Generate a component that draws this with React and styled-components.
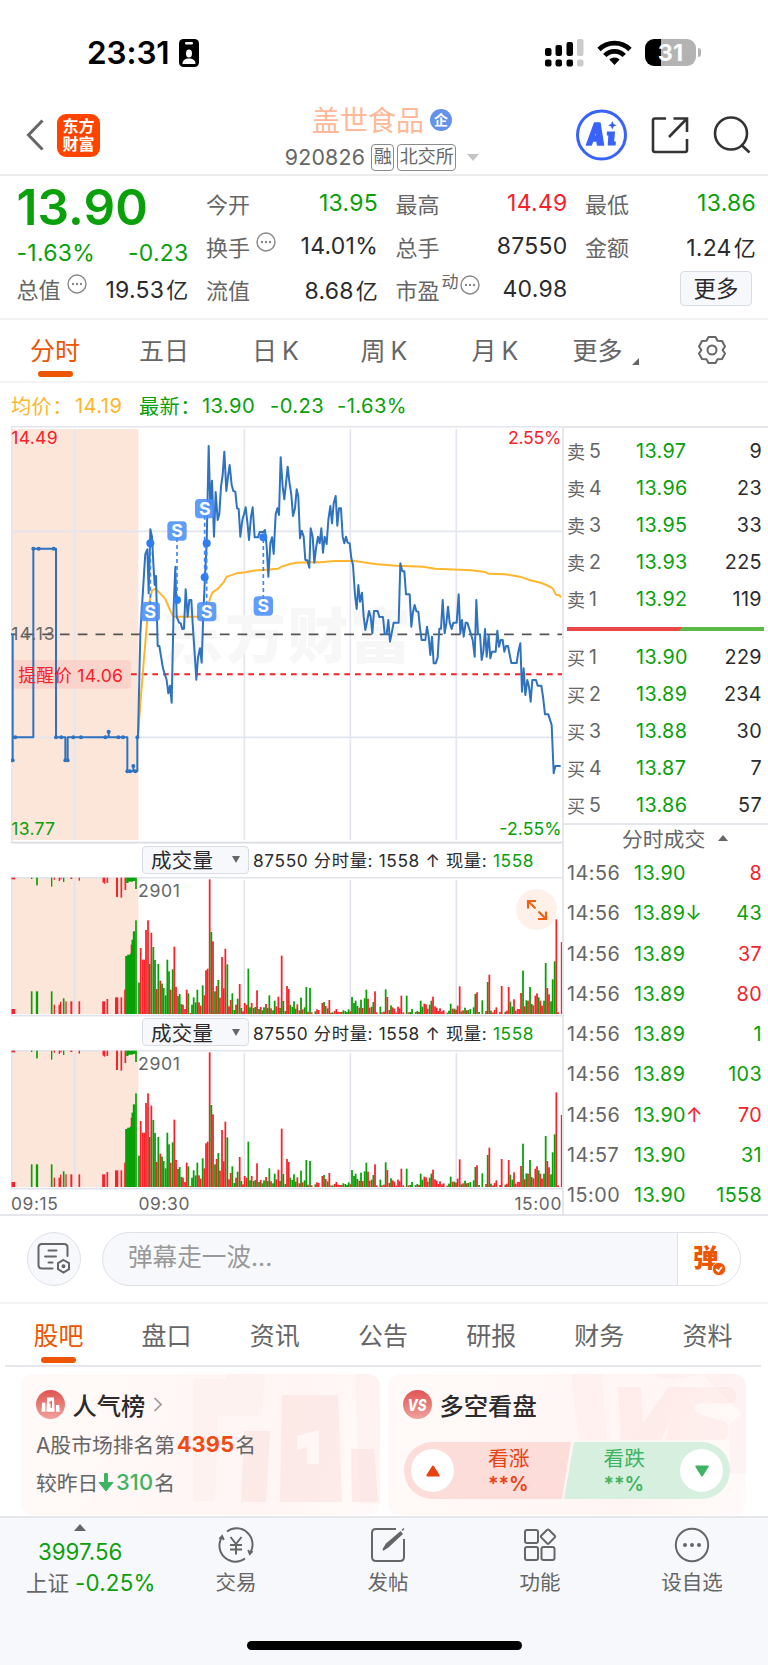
import React from "react";
import styled, { createGlobalStyle } from "styled-components";

const GREEN = "#09a009";
const RED = "#f5222a";
const ORANGE = "#ee5500";
const GREY = "#666666";
const INK = "#2b2b2d";
const LINE = "#e6e7ec";

const GlobalStyle = createGlobalStyle`
  * { box-sizing: border-box; }
  body {
    margin: 0;
    background: #fff;
    color: ${GREY};
    font-family: Inter, "Noto Sans CJK SC", sans-serif;
    -webkit-font-smoothing: antialiased;
  }
  svg { display: block; flex: none; }
  svg text { font-family: Inter, "Noto Sans CJK SC", sans-serif; }
`;

const Screen = styled.div`
  width: 768px;
  height: 1665px;
  overflow: hidden;
  display: flex;
  flex-direction: column;
  background: #fff;
`;

/* ---------- status bar ---------- */
const StatusBar = styled.header`
  height: 96px;
  padding: 9px 67px 0 87px;
  display: flex;
  align-items: center;
  flex: none;
`;
const Clock = styled.span`
  font-size: 31.5px;
  font-weight: 600;
  color: #000;
  width: 92px;
  letter-spacing: -0.1px;
`;
const StatusIcons = styled.div`
  margin-left: auto;
  display: flex;
  align-items: center;
  gap: 13px;
`;
const Battery = styled.div`
  width: 51px;
  height: 27px;
  border-radius: 9px;
  background: linear-gradient(90deg, #000 31%, #b3b3b3 31%);
  color: #fff;
  font-size: 23.5px;
  font-weight: 700;
  line-height: 27px;
  text-align: center;
`;
const BatteryWrap = styled.div`
  display: flex;
  align-items: center;
  gap: 2px;
`;
const BatteryNub = styled.i`
  width: 3px;
  height: 9px;
  border-radius: 0 3px 3px 0;
  background: #b3b3b3;
`;

/* ---------- title bar ---------- */
const TitleBar = styled.div`
  height: 80px;
  flex: none;
  display: grid;
  grid-template-columns: 1fr auto 1fr;
  border-bottom: 2px solid #ececee;
`;
const TitleLeft = styled.div`
  display: flex;
  align-items: center;
  gap: 13px;
  padding: 0 0 2px 26px;
  margin-bottom: -2px;
`;
const AppLogo = styled.div`
  width: 43px;
  height: 43px;
  border-radius: 9px;
  background: #ff4400;
  color: #fff;
  font-size: 16px;
  font-weight: 700;
  line-height: 18px;
  text-align: center;
  padding-top: 3px;
`;
const TitleCenter = styled.div`
  display: flex;
  flex-direction: column;
  align-items: center;
  width: 240px;
  padding-top: 7px;
  margin-left: -4px;
`;
const StockName = styled.div`
  display: flex;
  align-items: center;
  gap: 6px;
  height: 32px;
  font-size: 28px;
  color: #ffb998;
`;
const Badge = styled.span`
  width: 22px;
  height: 22px;
  margin-top: 1px;
  border-radius: 50%;
  background: #6492ea;
  color: #fff;
  font-size: 14px;
  font-weight: 700;
  line-height: 21px;
  text-align: center;
`;
const CodeLine = styled.div`
  display: flex;
  align-items: center;
  height: 28px;
  margin-top: 8px;
  font-size: 21.3px;
  letter-spacing: 0.25px;
`;
const Tag = styled.span`
  height: 27px;
  border: 1.5px solid #8a8a8a;
  border-radius: 4px;
  font-size: 18px;
  line-height: 24px;
  letter-spacing: 0;
  padding: 0 1.5px;
  margin-left: ${(p) => p.$gap}px;
`;
const Caret = styled.i`
  width: 0;
  height: 0;
  border-left: ${(p) => p.$w}px solid transparent;
  border-right: ${(p) => p.$w}px solid transparent;
  border-${(p) => (p.$up ? "bottom" : "top")}: ${(p) => p.$h}px solid ${(p) => p.$c || GREY};
  margin: ${(p) => p.$m || 0};
`;
const TitleRight = styled.div`
  display: flex;
  align-items: center;
  justify-content: flex-end;
  gap: 24px;
  padding: 0 17px 2px 0;
  margin-bottom: -2px;
`;

/* ---------- quote summary ---------- */
const Quote = styled.section`
  height: 144px;
  flex: none;
  display: grid;
  grid-template-columns: 172px 172px 172px 171px;
  column-gap: 17.5px;
  padding: 7px 0 0 16.5px;
  border-bottom: 2px solid #f1f1f3;
`;
const QuoteCol = styled.div`
  display: flex;
  flex-direction: column;
  margin-top: ${(p) => p.$mt || 0}px;
`;
const BigPrice = styled.div`
  height: 48px;
  line-height: 48px;
  font-size: 49.5px;
  font-weight: 600;
  color: ${GREEN};
  letter-spacing: 0.1px;
`;
const QuoteRow = styled.div`
  height: ${(p) => p.$h || 43}px;
  display: flex;
  align-items: center;
  font-size: 22px;
  color: ${GREY};
`;
const QuoteValue = styled.span`
  margin-left: ${(p) => (p.$start ? 0 : "auto")};
  color: ${(p) => p.$c || INK};
  font-size: 23px;
  letter-spacing: 0.25px;
`;
const Unit = styled.span`
  font-size: 22px;
  margin-left: 2px;
`;
const RaisedIcon = styled.span`
  margin: -8px 0 0 ${(p) => p.$ml}px;
`;
const Raised = styled.span`
  font-size: 17px;
  margin: -16px 0 0 2px;
`;
const MoreButton = styled.button`
  align-self: flex-end;
  width: 72px;
  height: 35px;
  margin: 4px 4px 0 0;
  padding: 0;
  border: 1.5px solid #d8dce4;
  border-radius: 4px;
  background: #f7f8fb;
  color: ${INK};
  font: inherit;
  font-size: 22.5px;
  line-height: 30px;
`;

/* ---------- period tabs ---------- */
const PeriodTabs = styled.nav`
  height: 63px;
  flex: none;
  display: grid;
  grid-template-columns: 110px 108px 115px 102px 120px 101px 1fr;
  border-bottom: 2px solid #f4f4f6;
`;
const Tab = styled.div`
  display: flex;
  flex-direction: column;
  align-items: center;
  justify-content: flex-start;
  padding-top: ${(p) => p.$pt}px;
  font-size: 25px;
  line-height: 36px;
  word-spacing: -2px;
  color: ${(p) => (p.$on ? ORANGE : GREY)};
  &::after {
    content: "";
    width: 35px;
    height: 6px;
    border-radius: 3px;
    margin-top: ${(p) => p.$bar}px;
    background: ${(p) => (p.$on ? ORANGE : "transparent")};
  }
`;
const TabText = styled.span`
  display: flex;
  align-items: flex-end;
`;
const Corner = styled.i`
  border-left: 7px solid transparent;
  border-bottom: 7px solid ${GREY};
  margin: 0 0 4px 9px;
`;

/* ---------- market area ---------- */
const Legend = styled.div`
  height: 43px;
  flex: none;
  display: flex;
  align-items: center;
  padding: 1px 0 0 11px;
  font-size: 20.2px;
  letter-spacing: 0.4px;
  color: ${GREEN};
`;
const LegendItem = styled.span`
  width: ${(p) => p.$w}px;
  color: ${(p) => p.$c || GREEN};
  white-space: nowrap;
`;
const Market = styled.section`
  height: 790px;
  flex: none;
  display: flex;
  border-bottom: 2px solid ${LINE};
`;
const ChartColumn = styled.div`
  width: 562px;
  flex: none;
  padding-left: 11px;
  overflow: hidden;
`;
const SideColumn = styled.aside`
  flex: 1;
  border-left: 2px solid ${LINE};
`;
const IndicatorBar = styled.div`
  height: ${(p) => p.$h}px;
  padding: 0 0 ${(p) => p.$pb}px 131px;
  display: flex;
  align-items: center;
  font-size: 17.3px;
  letter-spacing: 0.63px;
  color: ${INK};
  white-space: nowrap;
`;
const Select = styled.div`
  width: 107px;
  height: 28px;
  border: 1.5px solid #d8dce4;
  border-radius: 4px;
  background: #f7f8fb;
  display: flex;
  align-items: center;
  justify-content: space-between;
  padding: 0 8.5px 1px 8px;
  font-size: 20.5px;
  letter-spacing: 0.2px;
  margin-right: 4px;
`;
const Up = styled.span`
  color: ${(p) => p.$c || GREEN};
`;
const VolumePane = styled.div`
  position: relative;
  height: 138px;
`;
const ExpandButton = styled.div`
  position: absolute;
  left: 505px;
  top: 12px;
  width: 41px;
  height: 41px;
  border-radius: 50%;
  background: #fff0ea;
  display: flex;
  align-items: center;
  justify-content: center;
`;
const TimeAxis = styled.div`
  display: flex;
  height: 26px;
  align-items: center;
  font-size: 17.4px;
  letter-spacing: 0.6px;
  padding: 4px 0 0 0;
`;
const AxisLabel = styled.span`
  width: ${(p) => (p.$w ? p.$w + "px" : "auto")};
  margin-left: ${(p) => (p.$end ? "auto" : 0)};
`;

const Book = styled.div`
  height: 399px;
  padding: 4px 6px 0 3px;
  border-bottom: 2px solid ${LINE};
  border-top: 2px solid ${LINE};
`;
const BookRow = styled.div`
  height: 37.2px;
  display: grid;
  grid-template-columns: 69px 60px 1fr;
  align-items: center;
  font-size: 19.8px;
  color: ${GREY};
`;
const BookSide = styled.span`
  display: flex;
  align-items: center;
  font-size: 18px;
  gap: 4px;
  b { font-weight: 400; font-size: 19.5px; }
`;
const Num = styled.span`
  color: ${(p) => p.$c || INK};
  text-align: ${(p) => (p.$left ? "left" : "right")};
  letter-spacing: 0.35px;
  white-space: nowrap;
`;
const Ratio = styled.div`
  height: 4.5px;
  margin: 9px -2px 6.5px 0;
  background: linear-gradient(135deg, #ea4848 0 57.5%, #5cb946 57.5%);
`;
const TradesTitle = styled.div`
  height: 28px;
  display: flex;
  align-items: center;
  padding: 0 0 2px 58px;
  font-size: 20.8px;
`;
const TradeRow = styled.div`
  height: 40.25px;
  padding: 0 6px 0 3px;
  display: grid;
  grid-template-columns: 67px 68px 1fr;
  align-items: center;
  font-size: 19.8px;
`;
const Time = styled.span`
  letter-spacing: 0.5px;
`;

/* ---------- comment bar ---------- */
const CommentBar = styled.div`
  height: 88px;
  flex: none;
  display: flex;
  align-items: center;
  padding: 0 27px 0 26.5px;
  gap: 21.5px;
  border-bottom: 2px solid #f3f3f5;
`;
const RoundButton = styled.div`
  width: 54px;
  height: 54px;
  border: 1.5px solid #dfe1e8;
  border-radius: 50%;
  background: #f7f8fb;
  display: flex;
  align-items: center;
  justify-content: center;
`;
const CommentInput = styled.div`
  flex: 1;
  height: 54px;
  border: 1.5px solid #dfe1e8;
  border-radius: 27px;
  background: #f7f8fb;
  display: flex;
  overflow: hidden;
  padding-left: 25px;
  font-size: 24.6px;
  line-height: 48px;
  color: #999;
`;
const BarrageToggle = styled.div`
  position: relative;
  margin-left: auto;
  width: 63px;
  border-left: 1.5px solid #dfe1e8;
  background: #fff;
  color: ${ORANGE};
  font-size: 25.5px;
  font-weight: 900;
  padding-left: 15px;
  line-height: 50px;
  svg { position: absolute; left: 34px; top: 29px; }
`;

const SectionTabs = styled.nav`
  height: 63px;
  flex: none;
  margin: 0 7px 0 5px;
  display: grid;
  grid-template-columns: repeat(7, 108.2px);
  justify-content: center;
  border-bottom: 2px solid ${LINE};
`;

/* ---------- cards ---------- */
const Cards = styled.section`
  flex: none;
  height: 149px;
  display: grid;
  grid-template-columns: 359px 358px;
  gap: 8px;
  padding: 7px 0 0 21px;
`;
const Card = styled.div`
  position: relative;
  height: 141px;
  border-radius: 12px 12px 10px 10px;
  background: linear-gradient(110deg, #fffaf9, #fff5f4 70%, #fffbfa);
  overflow: hidden;
  padding: 14px 15px 0;
`;
const CardArt = styled.svg`
  position: absolute;
  right: 0;
  top: 0;
`;
const CardBody = styled.div`
  position: relative;
`;
const CardTitle = styled.div`
  display: flex;
  align-items: center;
  height: 32px;
  gap: 7.5px;
  font-size: 24.3px;
  font-weight: 500;
  color: ${INK};
`;
const CardText = styled.div`
  display: flex;
  align-items: center;
  height: 38px;
  margin-top: ${(p) => p.$mt || 0}px;
  font-size: 20.8px;
`;
const Strong = styled.b`
  font-size: 21.8px;
  font-weight: ${(p) => p.$fw};
  color: ${(p) => p.$c};
  letter-spacing: 0.2px;
  margin: 0 1px 0 1.5px;
`;
const Vote = styled.div`
  display: flex;
  position: relative;
  width: 326px;
  height: 57px;
  margin: 22px 0 0 1px;
`;
const VoteHalf = styled.div`
  display: flex;
  align-items: center;
  flex-direction: ${(p) => (p.$right ? "row-reverse" : "row")};
  width: ${(p) => (p.$right ? 167 : 169)}px;
  margin-left: ${(p) => (p.$right ? -10 : 0)}px;
  padding: 0 7px;
  border-radius: ${(p) => (p.$right ? "0 29px 29px 0" : "29px 0 0 29px")};
  clip-path: ${(p) => (p.$right ? "polygon(11px 0, 100% 0, 100% 100%, 1px 100%)" : "polygon(0 0, 167px 0, 158px 100%, 0 100%)")};
  background: ${(p) => (p.$right ? "#d6efde" : "#fdddda")};
  color: ${(p) => (p.$right ? "#3eb463" : "#e84212")};
`;
const VoteKnob = styled.span`
  width: 43px;
  height: 43px;
  border-radius: 50%;
  background: #fff;
  display: flex;
  align-items: center;
  justify-content: center;
`;
const VoteText = styled.span`
  display: flex;
  flex-direction: column;
  font-size: 20.8px;
  line-height: 26px;
  margin: ${(p) => (p.$right ? "0 35px 0 0" : "0 0 0 34px")};
  b { font-size: 19.5px; font-weight: 600; line-height: 22px; padding-top: 1px; }
`;

/* ---------- bottom navigation ---------- */
const BottomNav = styled.footer`
  flex: 1;
  background: #f7f8fb;
  border-top: 2px solid #e6e7ea;
  display: flex;
  flex-direction: column;
  align-items: center;
`;
const NavItems = styled.div`
  width: 768px;
  display: grid;
  grid-template-columns: 160px repeat(4, 152px);
  height: 123px;
`;
const NavItem = styled.div`
  display: flex;
  flex-direction: column;
  align-items: center;
  padding-top: 9px;
  font-size: 20.5px;
  line-height: 30px;
  gap: 5px;
`;
const IndexItem = styled.div`
  display: flex;
  flex-direction: column;
  align-items: flex-start;
  padding: 6px 0 0 26px;
  font-size: 22.3px;
  line-height: 31px;
  white-space: nowrap;
`;
const IndexValue = styled.span`
  color: ${GREEN};
  margin: 5px 0 0 12px;
`;
const IndexName = styled.span`
  font-size: 21.5px;
`;
const IndexChange = styled.span`
  font-size: 22.3px;
  color: ${GREEN};
  letter-spacing: 0.2px;
`;
const HomeIndicator = styled.i`
  width: 275px;
  height: 9px;
  border-radius: 5px;
  background: #000;
`;

/* ---------- icons ---------- */
const DotsIcon = () => (
  <svg width="20" height="20" viewBox="0 0 20 20" fill="none" stroke="#888" strokeWidth="1.4">
    <circle cx="10" cy="10" r="9" />
    <g fill="#888" stroke="none"><circle cx="6" cy="10" r="1.2" /><circle cx="10" cy="10" r="1.2" /><circle cx="14" cy="10" r="1.2" /></g>
  </svg>
);
const IdIcon = () => (
  <svg width="20" height="28" viewBox="0 0 20 28">
    <rect width="20" height="28" rx="4.5" />
    <g fill="#fff"><rect x="6" y="3" width="8" height="2.6" rx="1.3" /><ellipse cx="10" cy="14.5" rx="3" ry="4" /><path d="M3.5 25c0-4 3-5.500 6.500-5.500s6.500 1.500 6.500 5.500z" /></g>
  </svg>
);
const SignalIcon = () => (
  <svg width="39" height="28" viewBox="0 0 39 28">
    <g><rect x="0" y="9" width="6.500" height="8" rx="2" /><rect x="10.500" y="6" width="6.500" height="11" rx="2" /><rect x="21.500" y="3" width="6.500" height="14" rx="2" />
      <rect x="0" y="20.500" width="6.500" height="7" rx="2" /><rect x="10.500" y="20.500" width="6.500" height="7" rx="2" /><rect x="21.500" y="20.500" width="6.500" height="7" rx="2" /></g>
    <g fill="#ccc"><rect x="32" y="0" width="6.500" height="17" rx="2" /><rect x="32" y="20.500" width="6.500" height="7" rx="2" /></g>
  </svg>
);
const WifiIcon = () => (
  <svg width="35" height="26" viewBox="0 0 35 26" fill="none" stroke="#000" strokeWidth="4.600">
    <path d="M2 9.500C10.500 1 24.500 1 33 9.500" /><path d="M7.800 15.500C13 10 22 10 27.200 15.500" />
    <path d="M17.500 25l-5.200-5.500c3-2.800 7.400-2.800 10.400 0z" fill="#000" stroke="none" />
  </svg>
);
const BackIcon = () => (
  <svg width="18" height="32" viewBox="0 0 18 32" fill="none" stroke={GREY} strokeWidth="3"><path d="M16.500 1.500L2.500 16l14 14.500" /></svg>
);
const AiIcon = () => (
  <svg width="51" height="52" viewBox="0 0 51 52">
    <circle cx="25.500" cy="26" r="24" fill="#fff" stroke="#3863fb" strokeWidth="3" />
    <path d="M10.500 36L18.500 14h5.500l3.500 22h-6l-.6-4h-4.200l-1.400 4zM18 27h2.600L20 21z" fill="#3863fb" fillRule="evenodd" stroke="#3863fb" strokeWidth="1.400" strokeLinejoin="round" />
    <path d="M31 22.500H39l-.8 10H40l-.5 4h-7.800l.6-10h-1.600zM36.300 12l1.300 3 3 1.300-3 1.300-1.300 3-1.300-3-3-1.300 3-1.300z" fill="#3863fb" />
  </svg>
);
const ShareIcon = () => (
  <svg width="38" height="38" viewBox="0 0 38 38" fill="none" stroke="#333" strokeWidth="2.600">
    <path d="M15 2.500H4q-2 0-2 2V34q0 2 2 2h30q2 0 2-2V23M22.500 2.500H36V16M35.500 3L18 21" />
  </svg>
);
const SearchIcon = () => (
  <svg width="38" height="38" viewBox="0 0 38 38" fill="none" stroke="#333" strokeWidth="2.600"><circle cx="18" cy="17.500" r="16" /><path d="M28 28.500l8.500 8" /></svg>
);
const GearIcon = () => (
  <svg width="30" height="30" viewBox="0 0 30 30" fill="none" stroke={GREY} strokeWidth="2" strokeLinejoin="round">
    <path d="M11.500 2h7l2 3.800 4.500.2 3 5.500-2.400 3.500 2.400 3.500-3 5.500-4.500.2-2 3.800h-7l-2-3.800L5 24l-3-5.500L4.400 15 2 11.500 5 6l4.500-.2z" /><circle cx="15" cy="15" r="4.500" />
  </svg>
);
const ExpandIcon = () => (
  <svg width="22" height="22" viewBox="0 0 22 22" fill="none" stroke="#f0600e" strokeWidth="2.100"><path d="M2 9.500V2h8M2.500 2.500l7 7M20 12.500V20h-8M19.500 19.500l-7-7" /></svg>
);
const PanelIcon = () => (
  <svg width="34" height="32" viewBox="0 0 34 32" fill="none" stroke={GREY} strokeWidth="2" strokeLinecap="round">
    <path d="M15.500 25.500H5q-3.500 0-3.500-3.500V4.500Q1.500 1 5 1h22q3.500 0 3.500 3.500V13" /><path d="M11.500 7.500h8M8 13.500h11M11.500 19.500h4" />
    <path d="M26.500 17l5.500 3.200v6L26.500 29.500 21 26.200v-6z" /><circle cx="26.500" cy="23.200" r="1" fill={GREY} />
  </svg>
);
const CheckBadge = () => (
  <svg width="14" height="14" viewBox="0 0 14 14"><circle cx="7" cy="7" r="6.600" fill={ORANGE} stroke="#fff" strokeWidth=".8" /><path d="M4 7l2.300 2.400L10 5" fill="none" stroke="#fff" strokeWidth="1.700" /></svg>
);
const RankIcon = () => (
  <svg width="29" height="29" viewBox="0 0 29 29">
    <defs><linearGradient id="ic" x2="0" y2="1"><stop stopColor="#df5552" /><stop offset="1" stopColor="#f0a19d" /></linearGradient></defs>
    <circle cx="14.500" cy="14.500" r="14.500" fill="url(#ic)" />
    <path d="M6.200 12.500l3.200.2v9H5.500zM11 7.500h7l.6 14.200h-8.200zM20 15h3.200l.6 6.700H20z" fill="#fff" />
    <path d="M13.300 12.800l2-1v6" stroke="#e06f6b" strokeWidth="1.500" fill="none" />
  </svg>
);
const VsIcon = () => (
  <svg width="29" height="29" viewBox="0 0 29 29"><circle cx="14.500" cy="14.500" r="14.500" fill="url(#ic)" />
    <text x="14" y="20.500" fontSize="16" fontWeight="800" fontStyle="italic" fill="#fff" textAnchor="middle" textLength="19" lengthAdjust="spacingAndGlyphs">VS</text></svg>
);
const TradeIcon = () => (
  <svg width="40" height="36" viewBox="0 0 40 36" fill="none" stroke={GREY} strokeWidth="2">
    <path d="M11 4.500A16 16 0 0 1 34 26M36.500 24l-2.700 3-1.600-4M29 31.500A16 16 0 0 1 6 10M3.500 12l2.600-3 1.700 4" />
    <path d="M14.500 10l5.500 7 5.500-7M20 17v10.500M14 18h12M14 22.500h12" />
  </svg>
);
const PostIcon = () => (
  <svg width="36" height="36" viewBox="0 0 36 36" fill="none" stroke={GREY} strokeWidth="2">
    <path d="M26 2H6Q2 2 2 6v24q0 4 4 4h24q4 0 4-4V12" /><path d="M13 23l3.500-6L30.500 5l1.500 2-14 13zM32 3.500l2-2" strokeWidth="1.500" fill={GREY} />
  </svg>
);
const GridIcon = () => (
  <svg width="34" height="36" viewBox="0 0 34 36" fill="none" stroke={GREY} strokeWidth="2">
    <rect x="2" y="3" width="13" height="13" rx="2" /><rect x="2" y="20" width="13" height="13" rx="2" /><rect x="18.500" y="20" width="13" height="13" rx="2" />
    <rect x="19.600" y="4.200" width="10.800" height="10.800" rx="1.500" transform="rotate(45 25 9.600)" />
  </svg>
);
const MoreIcon = () => (
  <svg width="36" height="36" viewBox="0 0 36 36" fill="none" stroke={GREY} strokeWidth="2"><circle cx="18" cy="18" r="16.200" />
    <g fill={GREY} stroke="none"><circle cx="11" cy="18" r="2" /><circle cx="18" cy="18" r="2" /><circle cx="25" cy="18" r="2" /></g></svg>
);

/* ---------- intraday chart (three units per pixel) ---------- */
const preOpen = "38,1021 38,643 38,952 100,952 100,386 168,386 168,952 196,952 196,1021 203,1021 203,952 326,952 326,935 326,952 382,952 382,1054 400,1054 400,1038 400,1054 412,1054 412,952 414,952";
const priceA = "414,952 421,640 434,430 436,402 442,388 446,520 451,328 456,350 460,430 464,495 468,468 473,678 478,678 489,745 494,762 500,780 505,820 510,797 515,848 521,560 526,440 530,590 537,608 542,610 547,627 552,626 557,508 563,590 568,540 574,540 578,610 584,700 589,779 594,712 600,685 605,728 610,580 615,470 620,370 626,78 631,260 636,182 642,350 647,216 653,300 658,282 663,200 668,165 673,95 679,213 684,170 689,135 695,195 700,213 706,215 711,265 716,267 721,350 727,300 732,283 737,262 743,315 747,360 753,290 758,262 764,352 774,352 779,336 790,336 795,330 800,380 805,470 811,370 816,352 821,402 827,283 832,265 837,285 842,112 848,200 853,238 858,190 863,140 868,185";
const priceB = "34,225 39,288 45,265 50,208 55,230 60,355 65,332 71,350 76,420 82,421 88,443 92,325 98,350 103,428 108,385 114,350 119,370 124,325 129,398 134,350 140,372 145,300 151,258 156,310 161,250 167,228 172,317 177,265 183,265 188,350 193,370 198,350 203,368 209,370 214,415 219,435 225,525 230,567 235,495 240,545 246,518 251,590 256,630 262,600 267,573 272,590 277,640 282,573 293,573 298,591 309,591 314,642 320,642 325,600 330,665 335,640 341,608 356,608 361,430 367,454 373,454 378,523 389,523 394,620 399,575 404,555 409,574 415,575 420,625 425,660 436,660 441,620 446,650 451,705 456,650 461,730 467,730 473,712 478,626 483,626 488,540 494,640 499,610 504,560 509,608 515,627 520,608 530,608 536,523 541,640 546,600 551,650 557,608 562,608 573,643 578,660 584,710 589,540 594,643 600,643 605,720 610,695 615,627 620,710 626,645 631,715 636,695 647,695 652,632 657,680 662,660 668,660 673,695 678,678 684,678 694,729 710,729 715,695 721,670 726,815 731,745 736,825 742,780 747,800 752,845 757,780 768,780 773,797 784,797 789,830 795,883 805,883 815,915 821,1060 826,1038 842,1038";
const average = "414,952 421,850 430,740 440,620 447,550 456,512 467,506 478,518 495,535 510,570 521,590 590,590 610,596 620,580 630,535 637,518 655,505 663,495 670,488 680,470 690,467 710,460 737,457 758,452 800,449 835,446 845,440 870,432 890,428 930,427 960,427 1005,423 1065,423 1125,432 1190,437 1270,440 1305,446 1415,451 1455,456 1465,461 1515,463 1560,470 1585,479 1625,489 1645,498 1655,503 1660,508 1668,524 1678,526 1683,532";
const price = priceA + " " + priceB.split(" ").map((p) => { const [x, y] = p.split(","); return `${+x + 840},${y}`; }).join(" ");
const quietDots = [[38, 1021], [46, 952], [100, 386], [116, 386], [161, 386], [168, 952], [184, 952], [196, 1021], [203, 1021], [220, 952], [243, 952], [316, 952], [326, 935], [355, 952], [369, 952], [382, 1054], [390, 1054], [400, 1038], [406, 1054], [412, 952]];
const sells = [
  { x: 451, badge: 575, dot: 370 }, { x: 531, badge: 333, dot: 540 }, { x: 614, badge: 266, dot: 472 },
  { x: 620, badge: 575, dot: 370 }, { x: 790, badge: 558, dot: 352 },
];

const PriceChart = () => (
  <svg width="552" height="418" viewBox="33 18 1656 1254">
    <rect x="35" y="27" width="380" height="1233" fill="#fce5d9" />
    <g stroke="#e3e6ef" strokeWidth="5" fill="none">
      <path d="M33 20H1689M35 18V1268M33 334H1689M33 952H1689M224 27V1260M733 27V1260M1051 27V1260M1369 27V1260" />
      <path d="M33 1268H1689" stroke="#d9dce2" />
    </g>
    <text x="488" y="715" fontSize="182" fontWeight="900" fill="#f7f7f8" textLength="744">东方财富</text>
    <path d="M33 643H1689" stroke="#555" strokeWidth="5.500" strokeDasharray="29 24.300" strokeDashoffset="13" />
    <rect x="35" y="720" width="358" height="86" rx="12" fill="#fad3ca" />
    <path d="M393 763H1689" stroke={RED} strokeWidth="6" strokeDasharray="17 15" />
    <polyline points={average} fill="none" stroke="#ffb62e" strokeWidth="6" strokeLinejoin="round" />
    <g fill="none" stroke="#2e72c0" strokeWidth="6" strokeLinejoin="round"><polyline points={preOpen} /><polyline points={price} /></g>
    <g fill="#2e72c0">{quietDots.map(([x, y]) => <circle key={`${x}-${y}`} cx={x} cy={y} r="6" />)}</g>
    <text x="55" y="785" fontSize="53" fill={RED} textLength="314">提醒价 14.06</text>
    <g fontSize="53">
      <text x="34" y="72" fill={RED} textLength="139">14.49</text>
      <text x="34" y="661" fill={GREY} textLength="130">14.13</text>
      <text x="34" y="1246" fill={GREEN} textLength="131">13.77</text>
      <text x="1524" y="72" fill={RED} textLength="160">2.55%</text>
      <text x="1498" y="1246" fill={GREEN} textLength="187">-2.55%</text>
    </g>
    {sells.map((s) => (
      <g key={`${s.x}-${s.badge}`}>
        <path d={`M${s.x} ${s.badge}V${s.dot}`} stroke="#3b86f5" strokeWidth="5" strokeDasharray="12 9" />
        <circle cx={s.x} cy={s.dot} r="12" fill="#2f7df0" />
        <rect x={s.x - 29} y={s.badge - 29} width="58" height="58" rx="12" fill="#4a90fb" fillOpacity=".88" />
        <text x={s.x} y={s.badge + 19} fontSize="53" fontWeight="700" fill="#fff" textAnchor="middle">S</text>
      </g>
    ))}
  </svg>
);

/* Each entry is x, bar top; "g" marks a falling minute. */
const volume = "417,442g 422,338 428,373 433,373 438,284 444,255 449,386g 454,292 460,335g 465,374g 470,461 475,386g 481,436 486,445g 491,458g 497,480g 502,373g 507,408g 512,463 518,402g 523,334 528,455 534,482g 539,476g 544,506g 549,508 555,521 560,463 565,474g 571,533 576,508g 581,486g 587,501g 592,463g 597,501 602,511 608,450g 613,480 618,405 623,400 629,132 634,290g 639,318 645,468g 650,452 655,434g 660,487 666,365 671,459 676,340 682,387g 687,513 692,494 697,474g 703,524g 708,508 713,490g 719,446 724,518g 729,528 734,503 740,508 745,400g 750,516g 755,503 761,518g 766,515g 771,465 777,521g 782,515 787,525g 792,516g 798,506 803,518g 808,480g 813,519 819,525g 824,496g 829,513 835,484 840,518g 845,361 850,497g 856,527g 861,452 866,461 871,508g 877,515g 882,498g 887,520g 892,507 898,525 903,487g 908,522 914,516g 919,455g 924,529 930,458g 935,531 946,528g 951,522 956,524 967,503 972,500g 977,512 983,519g 988,494 993,532 998,531g 1004,527 1009,521 1014,529 1020,530 1025,530 1030,525g 1036,527g 1041,530g 1046,522g 1051,528 1056,485g 1062,503g 1067,496g 1072,512g 1078,517 1083,493g 1088,518 1094,489g 1099,463g 1104,490 1109,517 1115,514g 1120,500g 1125,468 1130,531 1141,514g 1146,531 1152,529 1157,462g 1162,485 1168,524 1173,510g 1178,516 1183,520 1189,532 1194,514 1199,519 1204,481 1210,531 1220,481g 1226,531 1231,530g 1236,521g 1247,530g 1252,527g 1257,530 1262,496g 1267,514g 1273,505 1278,507 1283,520 1289,508g 1294,496g 1299,484 1305,513 1310,517 1315,527 1320,519 1326,528 1331,525 1342,532 1347,526g 1352,505g 1358,520 1363,520g 1368,523 1373,511 1379,453 1384,528g 1389,525 1395,517g 1400,525 1405,524g 1411,521g 1421,516g 1426,476g 1431,471 1437,530g 1447,495g 1458,527 1463,440g 1468,418 1473,526g 1479,531 1484,524 1489,516 1500,530 1505,452 1516,529g 1521,526 1526,455 1531,499g 1537,514g 1542,492 1547,526 1553,521 1558,521 1563,473 1569,406g 1574,513 1579,495g 1584,496 1590,455g 1595,506g 1600,510 1606,481 1611,474 1616,486g 1621,496 1626,511 1632,496g 1637,383g 1642,458 1647,477 1653,498g 1658,432g 1664,378g 1669,252 1674,531 1685,320"
  .split(" ").map((s) => { const [x, y] = s.split(","); return { x: +x, y: parseInt(y, 10), g: s.endsWith("g") }; });
/* x, bar top, width, falling */
const auction = [[40, 521, 11, 0], [95, 468, 5, 1], [111, 468, 7, 1], [155, 468, 5, 1], [163, 508, 4, 0], [178, 508, 5, 0], [182, 499, 4, 0], [191, 489, 5, 1], [198, 498, 4, 0], [214, 498, 6, 0], [238, 498, 5, 0], [311, 498, 9, 0], [322, 491, 5, 0], [350, 486, 10, 0], [364, 486, 5, 0], [375, 463, 5, 0], [380, 362, 9, 1], [386, 358, 9, 1], [394, 328, 4, 0], [393, 355, 7, 1], [397, 313, 5, 1], [402, 288, 7, 1], [408, 255, 5, 1]];
const hanging = [[40, 132, 11, 0], [95, 131, 4, 1], [111, 150, 5, 1], [155, 154, 4, 1], [163, 133, 4, 0], [178, 137, 4, 0], [183, 132, 4, 0], [191, 140, 4, 1], [214, 131, 6, 0], [238, 136, 4, 0], [310, 142, 5, 0], [314, 145, 4, 0], [322, 143, 5, 0], [351, 185, 6, 0], [364, 187, 5, 0], [376, 164, 5, 0], [382, 143, 7, 1], [391, 139, 16, 1], [402, 137, 8, 1], [408, 161, 5, 1]];
const barColor = (g) => (g ? "#07a007" : "#f8222a");

const VolumeChart = () => (
  <svg width="552" height="140" viewBox="33 125 1656 420">
    <rect x="35" y="127" width="380" height="409" fill="#fce5d9" />
    <path d="M33 127H1689M33 541H1689M35 127V541M224 134V536M733 134V536M1051 134V536M1369 134V536" stroke="#e0e3ec" strokeWidth="5" />
    {auction.map(([x, y, w, g], i) => <rect key={i} x={x - w / 2} y={y} width={w} height={536 - y} fill={barColor(g)} />)}
    {hanging.map(([x, y, w, g], i) => <rect key={i} x={x - w / 2} y="127" width={w} height={y - 127} fill={barColor(g)} />)}
    {volume.map((b) => <rect key={b.x} x={b.x - 2.6} y={b.y} width="5.300" height={536 - b.y} fill={barColor(b.g)} />)}
    <text x="414" y="185" fontSize="53" fill={GREY} textLength="126">2901</text>
  </svg>
);

const Indicator = ({ h, pb }) => (
  <IndicatorBar $h={h} $pb={pb}>
    <Select>成交量<Caret $w={4.5} $h={7.5} $c="#666" $m="1px 0 0" /></Select>
    <span>87550 分时量: 1558 ↑ 现量: <Up>1558</Up></span>
  </IndicatorBar>
);

const asks = [["5", "13.97", "9"], ["4", "13.96", "23"], ["3", "13.95", "33"], ["2", "13.93", "225"], ["1", "13.92", "119"]];
const bids = [["1", "13.90", "229"], ["2", "13.89", "234"], ["3", "13.88", "30"], ["4", "13.87", "7"], ["5", "13.86", "57"]];
const trades = [
  ["14:56", "13.90", "", "8", RED], ["14:56", "13.89", "↓", "43", GREEN], ["14:56", "13.89", "", "37", RED],
  ["14:56", "13.89", "", "80", RED], ["14:56", "13.89", "", "1", GREEN], ["14:56", "13.89", "", "103", GREEN],
  ["14:56", "13.90", "↑", "70", RED], ["14:57", "13.90", "", "31", GREEN], ["15:00", "13.90", "", "1558", GREEN],
];
const Level = ({ side, row }) => (
  <BookRow>
    <BookSide>{side}<b>{row[0]}</b></BookSide>
    <Num $left $c={GREEN}>{row[1]}</Num>
    <Num>{row[2]}</Num>
  </BookRow>
);

export default function App() {
  return (
    <Screen>
      <GlobalStyle />
      <StatusBar>
        <Clock>23:31</Clock>
        <IdIcon />
        <StatusIcons>
          <SignalIcon />
          <WifiIcon />
          <BatteryWrap><Battery>31</Battery><BatteryNub /></BatteryWrap>
        </StatusIcons>
      </StatusBar>

      <TitleBar>
        <TitleLeft><BackIcon /><AppLogo>东方<br />财富</AppLogo></TitleLeft>
        <TitleCenter>
          <StockName>盖世食品<Badge>企</Badge></StockName>
          <CodeLine>920826<Tag $gap={6}>融</Tag><Tag $gap={3}>北交所</Tag><Caret $w={6.5} $h={7} $c="#c4c4c6" $m="0 0 0 11px" /></CodeLine>
        </TitleCenter>
        <TitleRight><AiIcon /><ShareIcon /><SearchIcon /></TitleRight>
      </TitleBar>

      <Quote>
        <QuoteCol>
          <BigPrice>13.90</BigPrice>
          <QuoteRow $h={43}><QuoteValue $start $c={GREEN}>-1.63%</QuoteValue><QuoteValue $c={GREEN}>-0.23</QuoteValue></QuoteRow>
          <QuoteRow $h={27}>总值<RaisedIcon $ml={6}><DotsIcon /></RaisedIcon><QuoteValue>19.53<Unit>亿</Unit></QuoteValue></QuoteRow>
        </QuoteCol>
        <QuoteCol $mt={-2}>
          <QuoteRow>今开<QuoteValue $c={GREEN}>13.95</QuoteValue></QuoteRow>
          <QuoteRow>换手<RaisedIcon $ml={6}><DotsIcon /></RaisedIcon><QuoteValue>14.01%</QuoteValue></QuoteRow>
          <QuoteRow>流值<QuoteValue>8.68<Unit>亿</Unit></QuoteValue></QuoteRow>
        </QuoteCol>
        <QuoteCol $mt={-2}>
          <QuoteRow>最高<QuoteValue $c={RED}>14.49</QuoteValue></QuoteRow>
          <QuoteRow>总手<QuoteValue>87550</QuoteValue></QuoteRow>
          <QuoteRow>市盈<Raised>动</Raised><RaisedIcon $ml={1}><DotsIcon /></RaisedIcon><QuoteValue>40.98</QuoteValue></QuoteRow>
        </QuoteCol>
        <QuoteCol $mt={-2}>
          <QuoteRow>最低<QuoteValue $c={GREEN}>13.86</QuoteValue></QuoteRow>
          <QuoteRow>金额<QuoteValue>1.24<Unit>亿</Unit></QuoteValue></QuoteRow>
          <MoreButton>更多</MoreButton>
        </QuoteCol>
      </Quote>

      <PeriodTabs>
        <Tab $on $pt={13} $bar={2}>分时</Tab>
        <Tab $pt={13}>五日</Tab>
        <Tab $pt={13}>日 K</Tab>
        <Tab $pt={13}>周 K</Tab>
        <Tab $pt={13}>月 K</Tab>
        <Tab $pt={13}><TabText>更多<Corner /></TabText></Tab>
        <Tab $pt={15}><GearIcon /></Tab>
      </PeriodTabs>

      <Legend>
        <LegendItem $w={64} $c="#ffb62e">均价：</LegendItem>
        <LegendItem $w={64} $c="#ffb62e">14.19</LegendItem>
        <LegendItem $w={63}>最新：</LegendItem>
        <LegendItem $w={68}>13.90</LegendItem>
        <LegendItem $w={67}>-0.23</LegendItem>
        <LegendItem $w={80}>-1.63%</LegendItem>
      </Legend>

      <Market>
        <ChartColumn>
          <PriceChart />
          <Indicator h={33} pb={2} />
          <VolumePane>
            <VolumeChart />
            <ExpandButton><ExpandIcon /></ExpandButton>
          </VolumePane>
          <Indicator h={35} pb={1} />
          <VolumePane><VolumeChart /></VolumePane>
          <TimeAxis>
            <AxisLabel $w={127.5}>09:15</AxisLabel><AxisLabel>09:30</AxisLabel><AxisLabel $end>15:00</AxisLabel>
          </TimeAxis>
        </ChartColumn>
        <SideColumn>
          <Book>
            {asks.map((r) => <Level key={r[0]} side="卖" row={r} />)}
            <Ratio />
            {bids.map((r) => <Level key={r[0]} side="买" row={r} />)}
          </Book>
          <TradesTitle>分时成交<Caret $up $w={5} $h={6.5} $m="0 0 0 13px" /></TradesTitle>
          {trades.map(([t, p, a, n, c], i) => (
            <TradeRow key={i}>
              <Time>{t}</Time>
              <Num $left $c={GREEN}>{p}<Up $c={a === "↑" ? RED : GREEN}>{a}</Up></Num>
              <Num $c={c}>{n}</Num>
            </TradeRow>
          ))}
        </SideColumn>
      </Market>

      <CommentBar>
        <RoundButton><PanelIcon /></RoundButton>
        <CommentInput>弹幕走一波...<BarrageToggle>弹<CheckBadge /></BarrageToggle></CommentInput>
      </CommentBar>

      <SectionTabs>
        {["股吧", "盘口", "资讯", "公告", "研报", "财务", "资料"].map((t, i) => (
          <Tab key={t} $on={i === 0} $pt={14} $bar={3}>{t}</Tab>
        ))}
      </SectionTabs>

      <Cards>
        <Card>
          <CardArt width="190" height="130" viewBox="0 0 190 130">
            <g fill="#fdeeed"><path d="M3 5h33V0h39l-3 42H28l-3 85H3zM165 0h25v130h-20z" opacity=".55" /></g>
            <g fill="#fbe3e1" opacity=".65"><path d="M54 57h26l-4 71H51zM92 21h56l4 107H90zM161 75h23l4 53h-26z" /></g>
            <path d="M107 62l22-6v34h-12V73l-10 3z" fill="#fff6f5" />
          </CardArt>
          <CardBody>
            <CardTitle><RankIcon />人气榜
              <svg width="9" height="15" viewBox="0 0 9 15" fill="none" stroke="#999" strokeWidth="1.600"><path d="M1.500 1L8 7.500 1.500 14" /></svg>
            </CardTitle>
            <CardText $mt={5}>A股市场排名第<Strong $fw={700} $c="#f04a14">4395</Strong>名</CardText>
            <CardText>较昨日
              <svg width="16" height="20" viewBox="0 0 16 20" fill="#3eb463" stroke="#3eb463" strokeLinejoin="round"><path d="M6.500 1.500h3v9H15L8 19 1 10.500h5.500z" /></svg>
              <Strong $fw={500} $c="#3eb463">310</Strong>名</CardText>
          </CardBody>
        </Card>
        <Card>
          <CardArt width="175" height="100" viewBox="0 0 175 100">
            <path d="M0 0h31l5 66H8zM80 0h95v100h-16V50l12-10L130 0l-30 6z" fill="#fdeceb" opacity=".45" />
            <path d="M47 13h23l2 36 26-36h60c9 0 9 16 4 16h-30c-12 0-10 10 0 12l20 6c9 4 6 19 0 19H94l6-20-10 20H50z" fill="#fce3e1" opacity=".45" />
          </CardArt>
          <CardBody>
            <CardTitle><VsIcon />多空看盘</CardTitle>
            <Vote>
              <VoteHalf>
                <VoteKnob><svg width="14" height="12" viewBox="0 0 14 12" fill="#e84212" stroke="#e84212" strokeLinejoin="round" strokeWidth="2"><path d="M7 1.500l5.700 9H1.300z" /></svg></VoteKnob>
                <VoteText>看涨<b>**%</b></VoteText>
              </VoteHalf>
              <VoteHalf $right>
                <VoteKnob><svg width="14" height="12" viewBox="0 0 14 12" fill="#3eb463" stroke="#3eb463" strokeLinejoin="round" strokeWidth="2"><path d="M7 10.500l5.700-9H1.300z" /></svg></VoteKnob>
                <VoteText $right>看跌<b>**%</b></VoteText>
              </VoteHalf>
            </Vote>
          </CardBody>
        </Card>
      </Cards>

      <BottomNav>
        <NavItems>
          <IndexItem>
            <Caret $up $w={6.5} $h={7} $m="0 0 0 48px" />
            <IndexValue>3997.56</IndexValue>
            <IndexName>上证 <IndexChange>-0.25%</IndexChange></IndexName>
          </IndexItem>
          <NavItem><TradeIcon />交易</NavItem>
          <NavItem><PostIcon />发帖</NavItem>
          <NavItem><GridIcon />功能</NavItem>
          <NavItem><MoreIcon />设自选</NavItem>
        </NavItems>
        <HomeIndicator />
      </BottomNav>
    </Screen>
  );
}
